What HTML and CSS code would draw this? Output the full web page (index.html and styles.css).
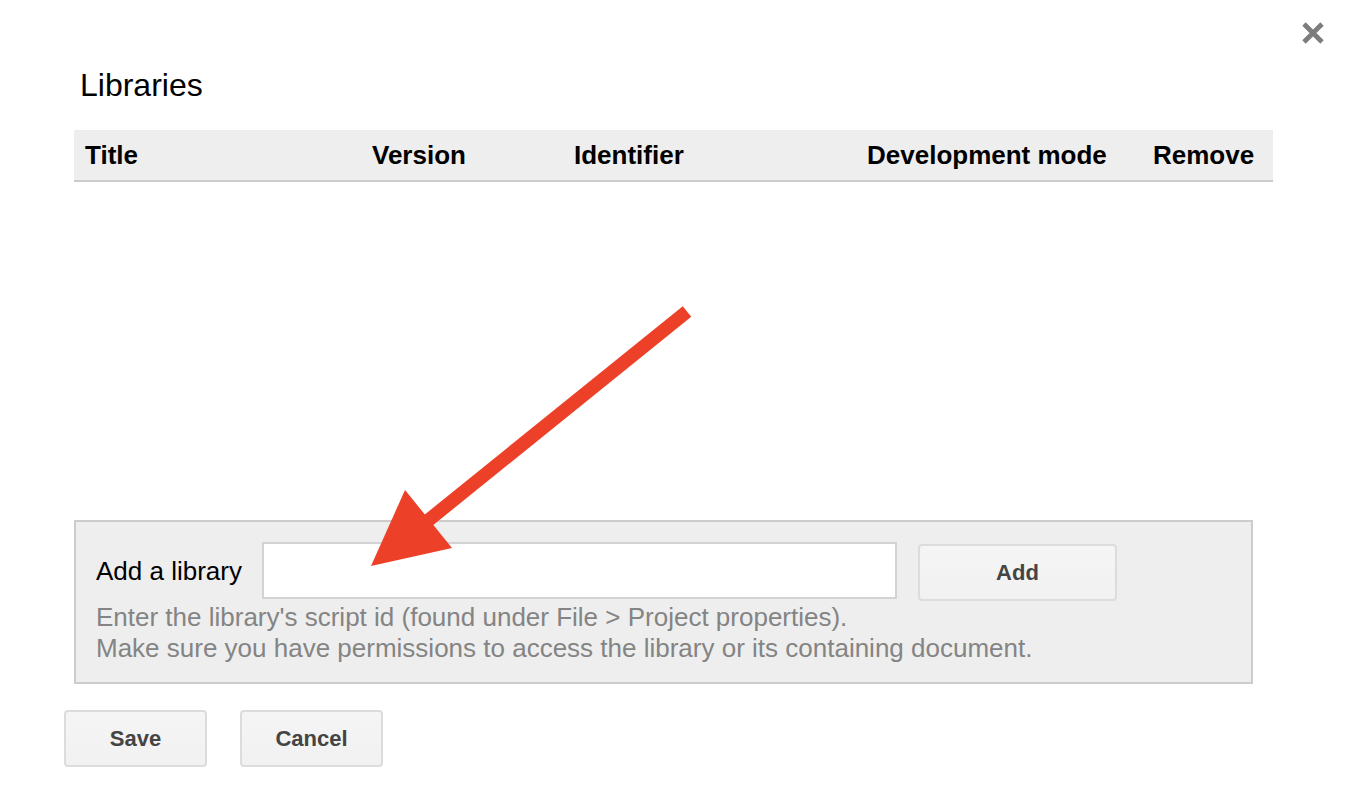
FILE: index.html
```html
<!DOCTYPE html>
<html lang="en">
<head>
<meta charset="utf-8">
<title>Libraries</title>
<link rel="stylesheet" href="styles.css">
</head>
<body>
<div class="dialog">
  <button class="close" aria-label="Close">
    <svg width="24" height="24" viewBox="0 0 24 24"><path d="M3 3L21 21M21 3L3 21" stroke="#7d7d7d" stroke-width="4.8" stroke-linecap="butt" fill="none"/></svg>
  </button>
  <h1 class="title">Libraries</h1>
  <div class="table">
    <div class="thead">
      <div class="th c1">Title</div>
      <div class="th c2">Version</div>
      <div class="th c3">Identifier</div>
      <div class="th c4">Development mode</div>
      <div class="th c5">Remove</div>
    </div>
    <div class="tbody"></div>
  </div>
  <div class="addbox">
    <div class="addrow">
      <label class="addlabel" for="lib">Add a library</label>
      <input id="lib" class="addinput" type="text">
      <button class="btn addbtn">Add</button>
    </div>
    <div class="hint">Enter the library's script id (found under File &gt; Project properties).<br>Make sure you have permissions to access the library or its containing document.</div>
  </div>
  <div class="actions">
    <button class="btn actbtn">Save</button>
    <button class="btn actbtn">Cancel</button>
  </div>
  <svg class="arrow" width="1352" height="802" viewBox="0 0 1352 802">
    <line x1="687" y1="311.5" x2="425" y2="523" stroke="#ec4128" stroke-width="13.5" stroke-linecap="butt"/>
    <polygon points="371,566 405,490 452,548" fill="#ec4128"/>
  </svg>
</div>
</body>
</html>
```

FILE: styles.css
```css
html, body {
  margin: 0;
  padding: 0;
  background: #fff;
  overflow: hidden;
}
body {
  font-family: "Liberation Sans", Arial, sans-serif;
  color: #000;
}
.dialog {
  position: relative;
  width: 1352px;
  height: 802px;
  padding-top: 67px;
  box-sizing: border-box;
}
.close {
  position: absolute;
  left: 1301px;
  top: 21px;
  width: 24px;
  height: 24px;
  padding: 0;
  border: 0;
  background: none;
  filter: blur(0.7px);
}
.close svg { display: block; }
.title {
  margin: 0 0 0 80px;
  font-size: 32px;
  font-weight: normal;
  line-height: 36px;
}
.table {
  margin: 27px 0 0 74px;
  width: 1199px;
}
.thead {
  display: grid;
  grid-template-columns: 287px 202px 293px 286px 131px;
  height: 50px;
  background: #eeeeee;
  border-bottom: 2px solid #cccccc;
  align-items: center;
}
.th {
  padding-left: 11px;
  font-size: 26px;
  font-weight: bold;
  line-height: 30px;
  white-space: nowrap;
}
.tbody {
  height: 338px;
}
.addbox {
  margin-left: 74px;
  width: 1179px;
  box-sizing: border-box;
  border: 2px solid #cccccc;
  background: #eeeeee;
  padding: 20px 20px 18px 20px;
}
.addrow {
  display: flex;
  align-items: center;
  height: 57px;
}
.addlabel {
  width: 166px;
  font-size: 26px;
  line-height: 30px;
  flex: none;
}
.addinput {
  width: 635px;
  height: 57px;
  box-sizing: border-box;
  border: 2px solid #d3d3d3;
  background: #fff;
  margin: 0;
  padding: 0 8px;
  font: 26px "Liberation Sans", Arial, sans-serif;
  flex: none;
}
.btn {
  box-sizing: border-box;
  height: 57px;
  border: 2px solid #dcdcdc;
  border-radius: 4px;
  background: linear-gradient(#f5f5f5, #f1f1f1);
  color: #444;
  font: bold 22px "Liberation Sans", Arial, sans-serif;
  padding: 0;
  margin: 0;
}
.addbtn {
  width: 199px;
  margin-left: 21px;
  margin-top: 4px;
  flex: none;
}
.hint {
  margin-top: 3px;
  font-size: 26px;
  line-height: 31px;
  color: #848484;
}
.actions {
  display: flex;
  gap: 33px;
  margin: 26px 0 0 64px;
}
.actbtn {
  width: 143px;
}
.arrow {
  position: absolute;
  left: 0;
  top: 0;
  pointer-events: none;
}
```
